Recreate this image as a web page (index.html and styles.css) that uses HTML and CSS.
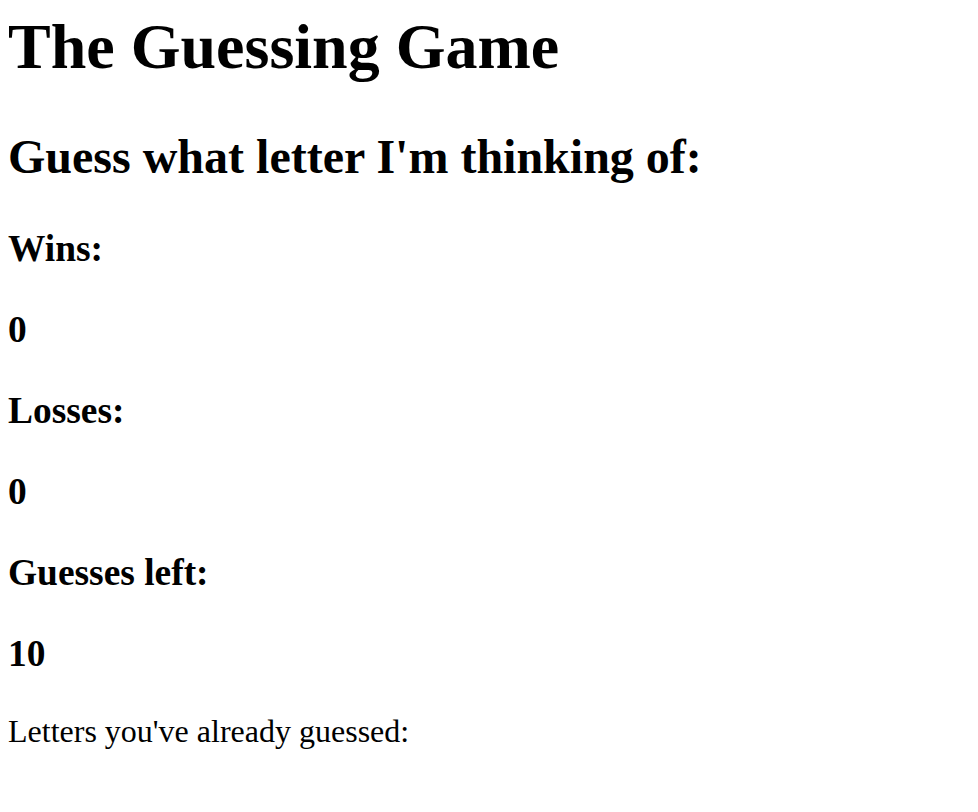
FILE: index.html
```html
<!DOCTYPE html>
<html lang="en">
<head>
<meta charset="utf-8">
<title>The Guessing Game</title>
<link rel="stylesheet" href="styles.css">
</head>
<body class="page">
  <h1 class="title">The Guessing Game</h1>
  <h2 class="subtitle">Guess what letter I'm thinking of:</h2>
  <h3 class="stat">Wins:</h3>
  <h3 class="stat">0</h3>
  <h3 class="stat">Losses:</h3>
  <h3 class="stat">0</h3>
  <h3 class="stat">Guesses left:</h3>
  <h3 class="stat">10</h3>
  <p class="guessed">Letters you've already guessed:</p>
</body>
</html>
```
FILE: styles.css
```css
.page {
  margin: 0 8px 8px;
  font-family: "Liberation Serif", "Times New Roman", serif;
  color: #000;
  background: #fff;
}
.title {
  font-size: 64px;
  font-weight: bold;
  margin: 10px 0 45px;
}
.subtitle {
  font-size: 48px;
  font-weight: bold;
  margin: 45px 0 43px;
}
.stat {
  font-size: 37.44px;
  font-weight: bold;
  margin: 38px 0;
}
.guessed {
  font-size: 32px;
  margin: 38px 0;
}
```
